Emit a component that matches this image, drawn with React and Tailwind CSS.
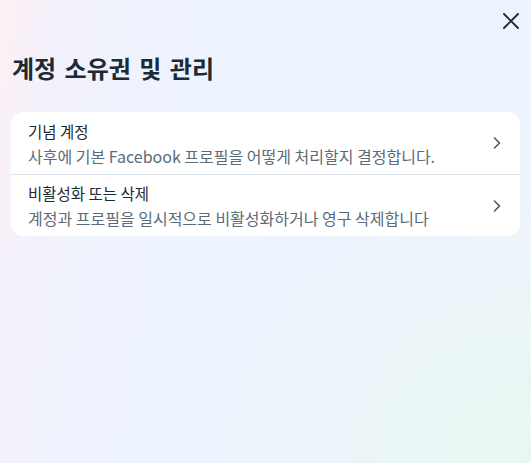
const items = [
  {
    title: "기념 계정",
    desc: "사후에 기본 Facebook 프로필을 어떻게 처리할지 결정합니다.",
  },
  {
    title: "비활성화 또는 삭제",
    desc: "계정과 프로필을 일시적으로 비활성화하거나 영구 삭제합니다",
  },
];

const font = {
  fontFamily: '"Noto Sans CJK KR", "Noto Sans", sans-serif',
};

const App = () => {
  return (
    <div
      className="h-screen w-full overflow-hidden bg-[radial-gradient(ellipse_at_100%_100%,#e9f7f2_0%,rgba(233,247,242,0)_45%),linear-gradient(100deg,#fdf0f4_0%,#f3f1fb_10%,#eef3fd_28%,#edf3fd_70%,#edf4fc_100%)] px-[11px]"
      style={font}
    >
      {/* Close button */}
      <div className="flex justify-end pt-[13px] pr-px">
        <svg width="16" height="16" viewBox="0 0 16 16" className="text-[#1c2b33]">
          <path
            d="M1 1 L15 15 M15 1 L1 15"
            stroke="currentColor"
            strokeWidth="1.9"
            strokeLinecap="round"
            fill="none"
          />
        </svg>
      </div>

      {/* Heading */}
      <h1 className="mt-[24px] ml-px text-[24px] leading-[30px] font-bold text-[#1c2b33] [word-spacing:3px]">
        계정 소유권 및 관리
      </h1>

      {/* Options card */}
      <div className="mt-[29px] overflow-hidden rounded-xl bg-white">
        {items.map((item, i) => (
          <div
            key={i}
            className={`flex items-center justify-between pl-[17px] pr-[19px] ${
              i > 0 ? "border-t border-[#dde4ec]" : ""
            }`}
          >
            <div className={`pb-[7px] ${i > 0 ? "pt-[7px]" : "pt-2"}`}>
              <p className="text-[15.5px] leading-[22px] text-[#1c2b33]">
                {item.title}
              </p>
              <p className="mt-[3px] text-[16px] leading-[22px] text-[#5b6b78]">
                {item.desc}
              </p>
            </div>
            <svg width="8" height="12" viewBox="0 0 8 12" className="text-[#465a69]">
              <path
                d="M1.5 1 L6.5 6 L1.5 11"
                stroke="currentColor"
                strokeWidth="1.6"
                strokeLinecap="round"
                strokeLinejoin="round"
                fill="none"
              />
            </svg>
          </div>
        ))}
      </div>
    </div>
  );
};

export default App;
